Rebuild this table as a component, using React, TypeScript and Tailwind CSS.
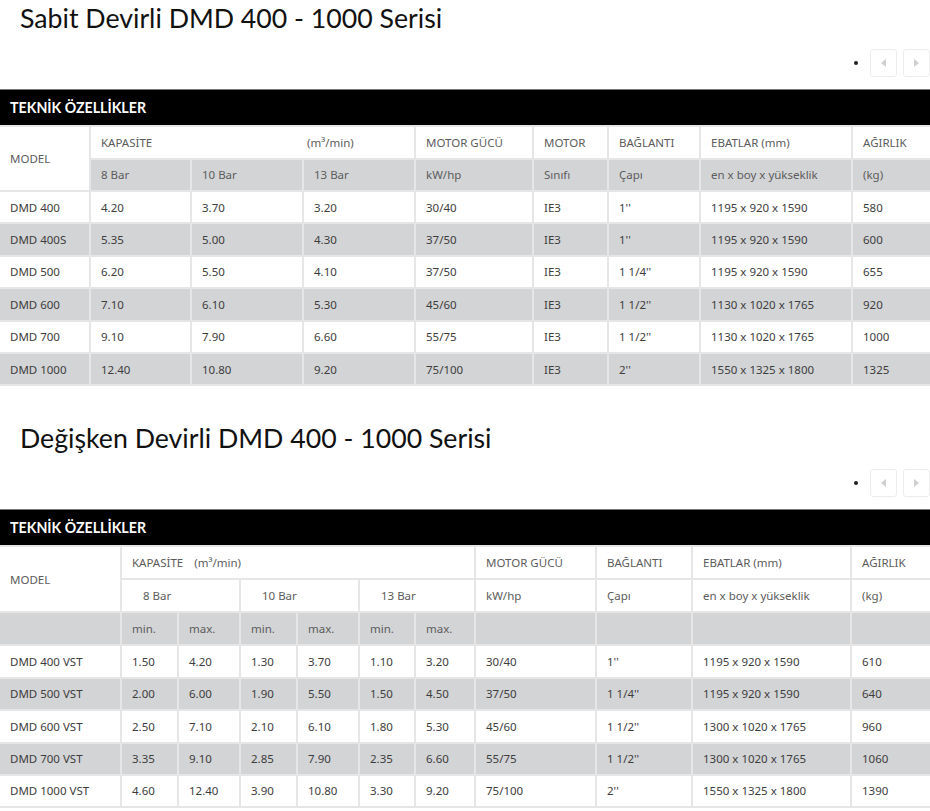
const cell = "border-2 border-[#e6e6e6] px-[10px] align-middle";
const hcell = `${cell} h-[33px]`;
const dcell = `${cell} h-[32.4px]`;
const head = "text-[#5c5c5c]";
const gray = "bg-[#d3d4d6]";

const fixedRows = [
  ["DMD 400", "4.20", "3.70", "3.20", "30/40", "IE3", "1''", "1195 x 920 x 1590", "580"],
  ["DMD 400S", "5.35", "5.00", "4.30", "37/50", "IE3", "1''", "1195 x 920 x 1590", "600"],
  ["DMD 500", "6.20", "5.50", "4.10", "37/50", "IE3", "1 1/4''", "1195 x 920 x 1590", "655"],
  ["DMD 600", "7.10", "6.10", "5.30", "45/60", "IE3", "1 1/2''", "1130 x 1020 x 1765", "920"],
  ["DMD 700", "9.10", "7.90", "6.60", "55/75", "IE3", "1 1/2''", "1130 x 1020 x 1765", "1000"],
  ["DMD 1000", "12.40", "10.80", "9.20", "75/100", "IE3", "2''", "1550 x 1325 x 1800", "1325"],
];

const vstRows = [
  ["DMD 400 VST", "1.50", "4.20", "1.30", "3.70", "1.10", "3.20", "30/40", "1''", "1195 x 920 x 1590", "610"],
  ["DMD 500 VST", "2.00", "6.00", "1.90", "5.50", "1.50", "4.50", "37/50", "1 1/4''", "1195 x 920 x 1590", "640"],
  ["DMD 600 VST", "2.50", "7.10", "2.10", "6.10", "1.80", "5.30", "45/60", "1 1/2''", "1300 x 1020 x 1765", "960"],
  ["DMD 700 VST", "3.35", "9.10", "2.85", "7.90", "2.35", "6.60", "55/75", "1 1/2''", "1300 x 1020 x 1765", "1060"],
  ["DMD 1000 VST", "4.60", "12.40", "3.90", "10.80", "3.30", "9.20", "75/100", "2''", "1550 x 1325 x 1800", "1390"],
];

function Pager() {
  return (
    <div className="mt-[13px] flex h-[28px] items-center justify-end">
      <span className="mr-[12px] h-[4px] w-[4px] rounded-full bg-[#222]" />
      <button className="flex h-[28px] w-[27px] items-center justify-center rounded-[3px] border border-[#ededed] bg-white">
        <svg width="5" height="8" viewBox="0 0 5 8">
          <polygon points="5,0 5,8 0,4" fill="#cfcfcf" />
        </svg>
      </button>
      <button className="ml-[6px] flex h-[28px] w-[27px] items-center justify-center rounded-[3px] border border-[#ededed] bg-white">
        <svg width="5" height="8" viewBox="0 0 5 8">
          <polygon points="0,0 0,8 5,4" fill="#cfcfcf" />
        </svg>
      </button>
    </div>
  );
}

function Bar() {
  return (
    <div className="mt-[12px] flex h-[36px] items-center border-t border-[#777] bg-black px-[10px] font-['Lato',sans-serif] text-[14.2px] font-bold text-white">
      TEKNİK ÖZELLİKLER
    </div>
  );
}

function Title({ children }: { children: string }) {
  return (
    <h2 className="h-[36px] pl-[20px] font-['Lato',sans-serif] text-[26.7px] leading-[36px] text-[#111]">
      {children}
    </h2>
  );
}

function DataRow({ r, i }: { r: string[]; i: number }) {
  return (
    <tr className={i % 2 === 1 ? gray : "bg-white"}>
      {r.map((v, j) => (
        <td
          key={j}
          className={`${dcell} ${j === 0 ? "border-l-0" : ""} ${j === r.length - 1 ? "border-r-0" : ""}`}
        >
          {v}
        </td>
      ))}
    </tr>
  );
}

export default function App() {
  return (
    <div className="w-[930px] bg-white font-['Noto_Sans',sans-serif] text-[11.5px] text-[#3d3d3d]">
      <Title>Sabit Devirli DMD 400 - 1000 Serisi</Title>
      <Pager />
      <Bar />
      <table className="w-full table-fixed border-collapse">
        <colgroup>
          <col className="w-[90px]" />
          <col className="w-[101px]" />
          <col className="w-[112px]" />
          <col className="w-[112px]" />
          <col className="w-[118px]" />
          <col className="w-[75px]" />
          <col className="w-[92px]" />
          <col className="w-[152px]" />
          <col className="w-[78px]" />
        </colgroup>
        <tbody>
          <tr className={head}>
            <td rowSpan={2} className={`${hcell} border-l-0`}>MODEL</td>
            <td colSpan={3} className={hcell}>
              <span className="inline-block w-[206px]">KAPASİTE</span>(m³/min)
            </td>
            <td className={hcell}>MOTOR GÜCÜ</td>
            <td className={hcell}>MOTOR</td>
            <td className={hcell}>BAĞLANTI</td>
            <td className={hcell}>EBATLAR (mm)</td>
            <td className={`${hcell} border-r-0`}>AĞIRLIK</td>
          </tr>
          <tr className={`${head} ${gray}`}>
            <td className={`${cell} h-[32px]`}>8 Bar</td>
            <td className={`${cell} h-[32px]`}>10 Bar</td>
            <td className={`${cell} h-[32px]`}>13 Bar</td>
            <td className={`${cell} h-[32px]`}>kW/hp</td>
            <td className={`${cell} h-[32px]`}>Sınıfı</td>
            <td className={`${cell} h-[32px]`}>Çapı</td>
            <td className={`${cell} h-[32px]`}>en x boy x yükseklik</td>
            <td className={`${cell} h-[32px] border-r-0`}>(kg)</td>
          </tr>
          {fixedRows.map((r, i) => (
            <DataRow key={r[0]} r={r} i={i} />
          ))}
        </tbody>
      </table>

      <div className="mt-[34px]">
        <Title>Değişken Devirli DMD 400 - 1000 Serisi</Title>
      </div>
      <Pager />
      <Bar />
      <table className="w-full table-fixed border-collapse">
        <colgroup>
          <col className="w-[121px]" />
          <col className="w-[57px]" />
          <col className="w-[62px]" />
          <col className="w-[57px]" />
          <col className="w-[62px]" />
          <col className="w-[56px]" />
          <col className="w-[60px]" />
          <col className="w-[121px]" />
          <col className="w-[96px]" />
          <col className="w-[159px]" />
          <col className="w-[79px]" />
        </colgroup>
        <tbody>
          <tr className={head}>
            <td rowSpan={2} className={`${hcell} border-l-0`}>MODEL</td>
            <td colSpan={6} className={hcell}>
              KAPASİTE <span className="ml-[8px]">(m³/min)</span>
            </td>
            <td className={hcell}>MOTOR GÜCÜ</td>
            <td className={hcell}>BAĞLANTI</td>
            <td className={hcell}>EBATLAR (mm)</td>
            <td className={`${hcell} border-r-0`}>AĞIRLIK</td>
          </tr>
          <tr className={head}>
            <td colSpan={2} className={`${hcell} pl-[21px]`}>8 Bar</td>
            <td colSpan={2} className={`${hcell} pl-[21px]`}>10 Bar</td>
            <td colSpan={2} className={`${hcell} pl-[21px]`}>13 Bar</td>
            <td className={hcell}>kW/hp</td>
            <td className={hcell}>Çapı</td>
            <td className={hcell}>en x boy x yükseklik</td>
            <td className={`${hcell} border-r-0`}>(kg)</td>
          </tr>
          <tr className={`${head} ${gray}`}>
            <td className={`${hcell} border-l-0`}></td>
            <td className={hcell}>min.</td>
            <td className={hcell}>max.</td>
            <td className={hcell}>min.</td>
            <td className={hcell}>max.</td>
            <td className={hcell}>min.</td>
            <td className={hcell}>max.</td>
            <td className={hcell}></td>
            <td className={hcell}></td>
            <td className={hcell}></td>
            <td className={`${hcell} border-r-0`}></td>
          </tr>
          {vstRows.map((r, i) => (
            <DataRow key={r[0]} r={r} i={i} />
          ))}
        </tbody>
      </table>
    </div>
  );
}
